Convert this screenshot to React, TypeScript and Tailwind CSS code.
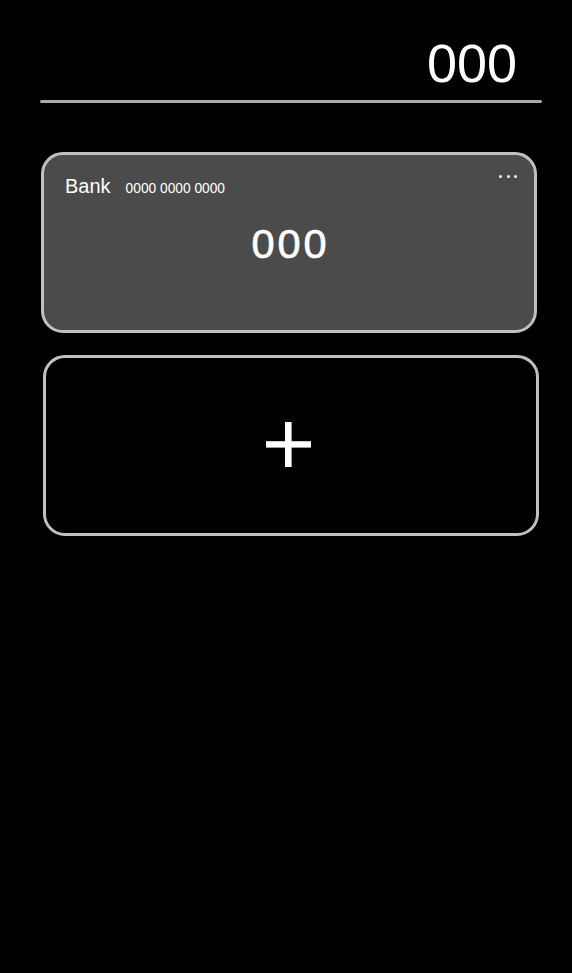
import React from "react";

export default function App() {
  return (
    <div
      className="min-h-screen w-full bg-black text-white"
      style={{ fontFamily: '"Liberation Sans", Arial, sans-serif' }}
    >
      <div className="pt-[36px] pr-[55px] text-right text-[54px] leading-none">000</div>
      <div className="ml-[40px] mt-[10px] h-[3px] w-[502px] rounded-full bg-[#aaaaaa]" />

      <div className="relative ml-[41px] mt-[49px] h-[181px] w-[496px] rounded-[22px] border-[3px] border-[#c0c0c0] bg-[#4b4b4b] pl-[21px] pt-[21px]">
        <div className="flex items-baseline gap-[15px] leading-none">
          <span className="text-[20px]">Bank</span>
          <span className="text-[13.75px]">0000 0000 0000</span>
        </div>
        <div className="mt-[27px] pr-[18px] text-center text-[41.5px] leading-none tracking-[3px] [-webkit-text-stroke:0.7px_white]">
          000
        </div>
        <div className="absolute right-[17px] top-[20px] flex gap-[4.5px]">
          <span className="block h-[3px] w-[3px] rounded-full bg-white" />
          <span className="block h-[3px] w-[3px] rounded-full bg-white" />
          <span className="block h-[3px] w-[3px] rounded-full bg-white" />
        </div>
      </div>

      <div className="ml-[43px] mt-[22px] flex h-[181px] w-[496px] items-center justify-center rounded-[22px] border-[3px] border-[#c0c0c0] bg-black pr-[6px] pb-[2px]">
        <svg width="45" height="45" viewBox="0 0 45 45">
          <rect x="0" y="19.2" width="45" height="6.4" fill="white" />
          <rect x="19" y="0" width="6.6" height="45" fill="white" />
        </svg>
      </div>
    </div>
  );
}
